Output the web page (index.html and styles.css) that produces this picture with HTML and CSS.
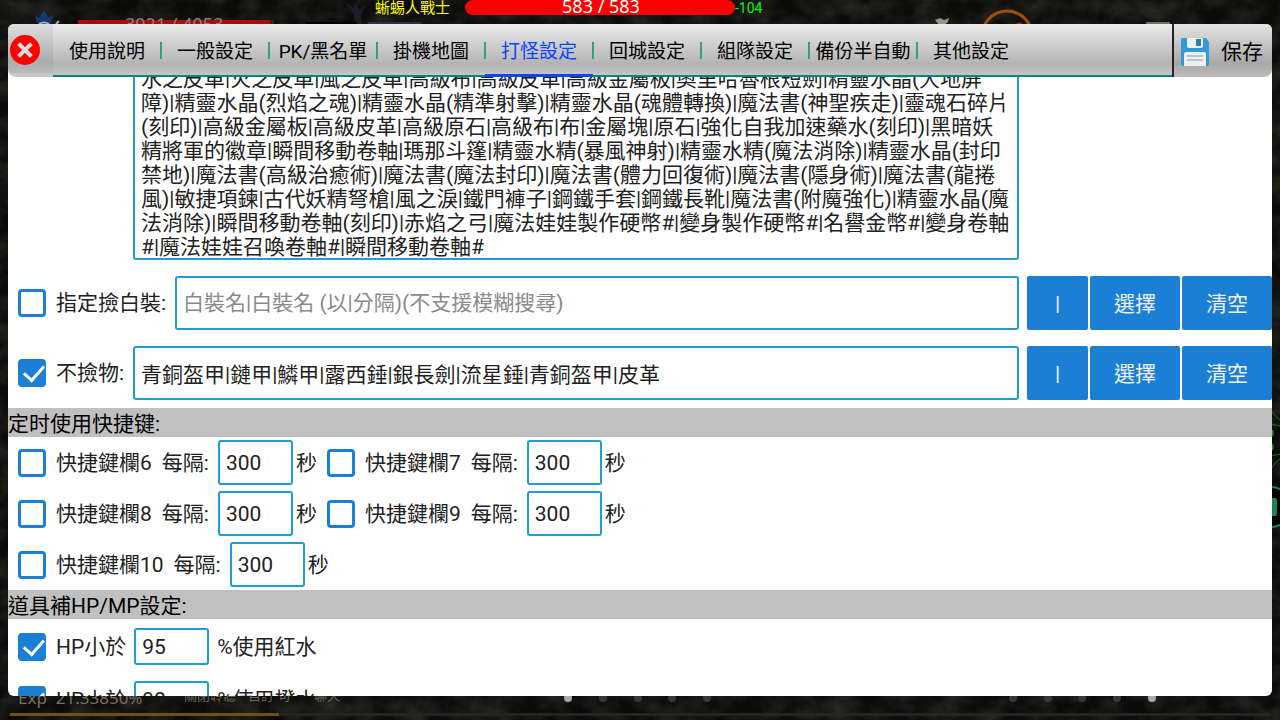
FILE: index.html
```html
<!DOCTYPE html>
<html lang="zh-Hant">
<head>
<meta charset="utf-8">
<meta name="viewport" content="width=device-width, initial-scale=1">
<title>打怪設定</title>
<link rel="stylesheet" href="styles.css">
</head>
<body>
<div class="scene">
  <svg class="scene-art" viewBox="0 0 1280 720" preserveAspectRatio="none" aria-hidden="true">
    <defs>
      <filter id="rock" x="0" y="0" width="100%" height="100%">
        <feTurbulence type="fractalNoise" baseFrequency="0.035 0.05" numOctaves="5" seed="8"/>
        <feColorMatrix values="0 0 0 0 0.13  0 0 0 0 0.13  0 0 0 0 0.11  1.4 0 0 0 -0.45"/>
      </filter>
    </defs>
    <rect width="1280" height="720" fill="#0b0b09"/>
    <rect width="1280" height="720" filter="url(#rock)" opacity="0.4"/>
    <rect x="78" y="20" width="192" height="10" fill="#a80c0c"/>
    <rect x="270" y="20" width="4" height="10" fill="#501616"/>
    <path d="M35 15l4 3 5-8 5 8 4-3-2 8H37z" fill="#123a70"/>
    <path d="M39 24q5-3 10 0M56 24l3-3" stroke="#9ab0c4" stroke-width="2" fill="none"/>
    <path d="M345 2l8 6 3-6 3 7 7-4-5 10 1 9h-6l-3-10z" fill="#1c1c2a"/>
    <rect x="305" y="22" width="52" height="5" fill="#000"/>
    <rect x="368" y="22" width="53" height="5" fill="#31313f"/>
    <path d="M935 20l5-2 4 2 5-2-1 4-4 3h-5z" fill="#9a9485"/>
    <rect x="1146" y="22" width="24" height="4" fill="#756d5e"/>
    <circle cx="1007" cy="36" r="25" fill="none" stroke="#a44b08" stroke-width="3"/>
    <path d="M1015 24l5-2 3 2z" fill="#a51b1b"/>
    <g fill="none" stroke="#15702f" stroke-width="1">
      <path d="M1271 410q4 7 9 10M1271 424l9 2M1271 456l9-2M1271 469q4-7 9-10"/>
    </g>
    <circle cx="1270" cy="433" r="4" fill="#11802e"/>
    <circle cx="1270" cy="447" r="4" fill="#11802e"/>
    <circle cx="1271" cy="507" r="20" fill="#000" stroke="#1f8257" stroke-width="2"/>
    <rect x="1265" y="498" width="12" height="18" rx="2" fill="#1f8257"/>
    <g fill="#383838">
      <circle cx="603" cy="698" r="4"/><circle cx="638" cy="698" r="4"/><circle cx="672" cy="698" r="4"/><circle cx="707" cy="698" r="4"/>
      <circle cx="1013" cy="698" r="4"/><circle cx="1048" cy="698" r="4"/><circle cx="1082" cy="698" r="4"/><circle cx="1117" cy="698" r="4"/>
    </g>
    <circle cx="568" cy="698" r="4" fill="#aaa"/>
    <circle cx="1152" cy="698" r="4" fill="#aaa"/>
    <rect x="10" y="713" width="1260" height="3" fill="#242424"/>
    <rect x="10" y="713" width="269" height="3" fill="#70500e"/>
  </svg>
  <span class="hud hud-hp">3921 / 4053</span>
  <span class="hud hud-exp">Exp&nbsp; 21.33850%</span>
  <div class="hud hud-chat"><span>關閉聆聽</span><span>自訂 句</span><span>聊天</span></div>
  <div class="target">
    <span class="target-name">蜥蜴人戰士</span>
    <span class="target-bar">583 / 583</span>
    <span class="target-damage">-104</span>
  </div>
</div>

<main class="panel">
  <header class="toolbar">
    <button class="close" type="button" aria-label="關閉">
      <svg width="30" height="30" viewBox="0 0 30 30" aria-hidden="true">
        <circle cx="15" cy="15" r="15" fill="#f00"/>
        <path d="M10 10l10 10M20 10L10 20" stroke="#dcdcdc" stroke-width="4" stroke-linecap="square"/>
      </svg>
    </button>
    <nav class="tabs">
      <button class="tab" type="button">使用說明</button>
      <button class="tab" type="button">一般設定</button>
      <button class="tab" type="button">PK/黑名單</button>
      <button class="tab" type="button">掛機地圖</button>
      <button class="tab tab-active" type="button">打怪設定</button>
      <button class="tab" type="button">回城設定</button>
      <button class="tab" type="button">組隊設定</button>
      <button class="tab" type="button">備份半自動</button>
      <button class="tab" type="button">其他設定</button>
    </nav>
    <button class="save" type="button">
      <svg width="30" height="30" viewBox="0 0 30 30" aria-hidden="true">
        <path d="M2 1h24l3 4v22q0 2-2 2H3q-2 0-2-2V3q0-2 1-2z" fill="#3498db"/>
        <path d="M7 1h16v8q0 2-2 2H9q-2 0-2-2z" fill="#ecf0f1"/>
        <rect x="16" y="2" width="5" height="7" fill="#2980b9"/>
        <path d="M4 17q0-2 2-2h18q2 0 2 2v12H4z" fill="#ecf0f1"/>
        <path d="M7 19h16M7 23h16" stroke="#bdc3c7" stroke-width="2"/>
      </svg>
      <span>保存</span>
    </button>
  </header>

  <div class="content">
    <div class="row row-list">
      <textarea class="field list" rows="8" wrap="off" aria-label="撿取物品">水之皮革|火之皮革|風之皮革|高級布|高級皮革|高級金屬板|奧里哈魯根短劍|精靈水晶(大地屏
障)|精靈水晶(烈焰之魂)|精靈水晶(精準射擊)|精靈水晶(魂體轉換)|魔法書(神聖疾走)|靈魂石碎片
(刻印)|高級金屬板|高級皮革|高級原石|高級布|布|金屬塊|原石|強化自我加速藥水(刻印)|黑暗妖
精將軍的徽章|瞬間移動卷軸|瑪那斗篷|精靈水精(暴風神射)|精靈水精(魔法消除)|精靈水晶(封印
禁地)|魔法書(高級治癒術)|魔法書(魔法封印)|魔法書(體力回復術)|魔法書(隱身術)|魔法書(龍捲
風)|敏捷項鍊|古代妖精弩槍|風之淚|鐵門褲子|鋼鐵手套|鋼鐵長靴|魔法書(附魔強化)|精靈水晶(魔
法消除)|瞬間移動卷軸(刻印)|赤焰之弓|魔法娃娃製作硬幣#|變身製作硬幣#|名譽金幣#|變身卷軸
#|魔法娃娃召喚卷軸#|瞬間移動卷軸#</textarea>
    </div>

    <div class="row row-item">
      <label class="check"><input type="checkbox">指定撿白裝:</label>
      <input class="field wide" type="text" placeholder="白裝名|白裝名 (以|分隔)(不支援模糊搜尋)" aria-label="指定撿白裝">
      <div class="actions">
        <button class="btn btn-bar" type="button">|</button>
        <button class="btn" type="button">選擇</button>
        <button class="btn" type="button">清空</button>
      </div>
    </div>

    <div class="row row-item">
      <label class="check"><input type="checkbox" checked>不撿物:</label>
      <input class="field wide" type="text" value="青銅盔甲|鏈甲|鱗甲|露西錘|銀長劍|流星錘|青銅盔甲|皮革" aria-label="不撿物">
      <div class="actions">
        <button class="btn btn-bar" type="button">|</button>
        <button class="btn" type="button">選擇</button>
        <button class="btn" type="button">清空</button>
      </div>
    </div>

    <h2 class="section" lang="zh-Hans">定时使用快捷键:</h2>
    <div class="timers">
      <div class="row">
        <div class="timer"><label class="check"><input type="checkbox">快捷鍵欄6</label><label class="every">每隔:<input class="field num" type="text" value="300"></label><span class="unit">秒</span></div>
        <div class="timer"><label class="check"><input type="checkbox">快捷鍵欄7</label><label class="every">每隔:<input class="field num" type="text" value="300"></label><span class="unit">秒</span></div>
      </div>
      <div class="row">
        <div class="timer"><label class="check"><input type="checkbox">快捷鍵欄8</label><label class="every">每隔:<input class="field num" type="text" value="300"></label><span class="unit">秒</span></div>
        <div class="timer"><label class="check"><input type="checkbox">快捷鍵欄9</label><label class="every">每隔:<input class="field num" type="text" value="300"></label><span class="unit">秒</span></div>
      </div>
      <div class="row">
        <div class="timer"><label class="check"><input type="checkbox">快捷鍵欄10</label><label class="every">每隔:<input class="field num" type="text" value="300"></label><span class="unit">秒</span></div>
      </div>
    </div>

    <h2 class="section">道具補HP/MP設定:</h2>
    <div class="potions">
      <div class="row potion">
        <label class="check"><input type="checkbox" checked>HP小於</label>
        <input class="field num num-short" type="text" value="95" aria-label="紅水百分比">
        <span>%使用紅水</span>
      </div>
      <div class="row potion">
        <label class="check"><input type="checkbox" checked>HP小於</label>
        <input class="field num num-short" type="text" value="90" aria-label="橙水百分比">
        <span>%使用橙水</span>
      </div>
    </div>
  </div>
</main>
</body>
</html>
```

FILE: styles.css
```css
* { box-sizing: border-box; }

body {
  margin: 0;
  height: 100vh;
  padding: 24px 8px;
  overflow: hidden;
  background: #0b0b09;
  color: #212121;
  font-family: Roboto, "Noto Sans CJK SC", sans-serif;
  font-size: 21px;
  line-height: 24px;
}

button, input, textarea {
  font: inherit;
  color: inherit;
  margin: 0;
}

button {
  border: 0;
  padding: 0;
  background: none;
  cursor: pointer;
}

/* Game scene behind the panel */
.scene {
  position: absolute;
  inset: 0;
  overflow: hidden;
}

.scene-art {
  display: block;
  width: 100%;
  height: 100%;
}

.hud {
  position: absolute;
  white-space: nowrap;
}

.hud-hp {
  left: 125px;
  top: 12px;
  font: 18px/24px "Noto Sans", sans-serif;
  color: #85807c;
}

.hud-exp {
  left: 18px;
  bottom: 10px;
  font: 17px/24px "Noto Sans", sans-serif;
  color: #7d7058;
}

.hud-chat {
  left: 184px;
  bottom: 14px;
  display: flex;
  gap: 12px;
  font-size: 13px;
  line-height: 20px;
  color: #6b6658;
}

.hud-chat span:last-child { padding-left: 12px; }

.target {
  position: absolute;
  left: 375px;
  top: 0;
  display: flex;
  line-height: 16px;
}

.target-name {
  width: 90px;
  font-size: 15px;
  color: #ff0;
}

.target-bar {
  width: 270px;
  height: 15px;
  padding-left: 2px;
  border-radius: 8px;
  background: #f00;
  color: #fff;
  font: 18px/13px "Noto Sans", sans-serif;
  text-align: center;
}

.target-damage {
  font-size: 14px;
  color: #0f0;
}

/* Settings panel */
.panel {
  position: relative;
  display: flex;
  flex-direction: column;
  height: 100%;
  border-radius: 6px;
  overflow: hidden;
  background: #fff;
}

.toolbar {
  flex: none;
  display: flex;
  height: 53px;
  font-size: 19px;
  color: #000;
}

.close {
  width: 45px;
  padding: 0 13px 2px 2px;
  display: flex;
  align-items: center;
  border-radius: 0 0 0 8px;
  background:
    linear-gradient(#dedede, #acacac 75%, #b9b9b9) 0 0 / 45px 49px no-repeat,
    #c8c8c8;
}

.close svg { flex: none; }

.tabs {
  flex: 1;
  display: flex;
  background: linear-gradient(#ebebeb, #b4b4b4 75%, #c8c8c8);
  box-shadow: inset 0 -2px #00897b;
}

.tab {
  position: relative;
  width: 108px;
  padding-top: 3px;
  white-space: nowrap;
}

.tab:not(:last-child)::after {
  content: "";
  position: absolute;
  right: -1px;
  top: 18px;
  width: 2px;
  height: 17px;
  background: #2f9d91;
}

.tab-active {
  color: #0b45ff;
  box-shadow: inset 0 -3px #0b45ff;
}

.save {
  width: 100px;
  padding: 2px 0 0 6px;
  display: flex;
  align-items: center;
  gap: 11px;
  border-left: 2px solid #222;
  border-radius: 0 0 8px 0;
  background: linear-gradient(#e3e3e3, #a8a8a8 75%, #bcbcbc);
  font-size: 21px;
}

.content {
  flex: 1;
  min-height: 0;
  overflow: hidden;
}

.row {
  display: flex;
  align-items: center;
}

.field {
  border: 2px solid #1f9fd0;
  border-radius: 3px;
  background: #fff;
  padding: 0 6px;
  outline: 0;
}

.field::placeholder { color: #8a8a8a; opacity: 1; }

/* The list is scrolled part of a line under the toolbar */
.row-list {
  margin-top: -10px;
  padding: 0 253px 0 125px;
}

.list {
  flex: 1;
  display: block;
  height: 193px;
  border-top: 0;
  resize: none;
  overflow: hidden;
}

.row-item {
  margin-top: 16px;
  gap: 8px;
}

.row-item .check { padding-right: 1px; }

.wide {
  flex: 1;
  min-width: 0;
  height: 54px;
}

.actions {
  display: flex;
  gap: 2px;
}

.btn {
  width: 90px;
  height: 54px;
  padding-top: 2px;
  border-radius: 2px;
  background: #1b7fd5;
  color: #f0f0f0;
}

.btn-bar { width: 61px; }

.check {
  display: flex;
  align-items: center;
  gap: 10px;
  padding-left: 10px;
  white-space: nowrap;
}

.check input {
  appearance: none;
  width: 28px;
  height: 28px;
  border: 3px solid #1b7fd5;
  border-radius: 4px;
  background: #fff;
}

.check input:checked {
  position: relative;
  background: #1b7fd5;
}

.check input:checked::after {
  content: "";
  position: absolute;
  left: 7px;
  top: -1px;
  width: 9px;
  height: 17px;
  border: solid #fff;
  border-width: 0 3px 3px 0;
  transform: rotate(42deg);
}

.section {
  margin: 8px 0 0;
  padding: 4px 0 1px;
  background: #c0c0c0;
  color: #000;
  font-size: 21px;
  font-weight: 400;
  line-height: 24px;
}

.timers {
  display: flex;
  flex-direction: column;
  gap: 6px;
  padding-top: 3px;
}

.timers + .section { margin-top: 3px; }

.timer {
  display: flex;
  align-items: center;
}

.every {
  display: flex;
  align-items: center;
  gap: 9px;
  padding-left: 10px;
}

.unit { padding-left: 3px; }

.num {
  width: 75px;
  height: 45px;
}

.num-short { height: 37px; }

.potions {
  display: flex;
  flex-direction: column;
  gap: 16px;
  padding-top: 9px;
}

.potion { gap: 8px; }
```
